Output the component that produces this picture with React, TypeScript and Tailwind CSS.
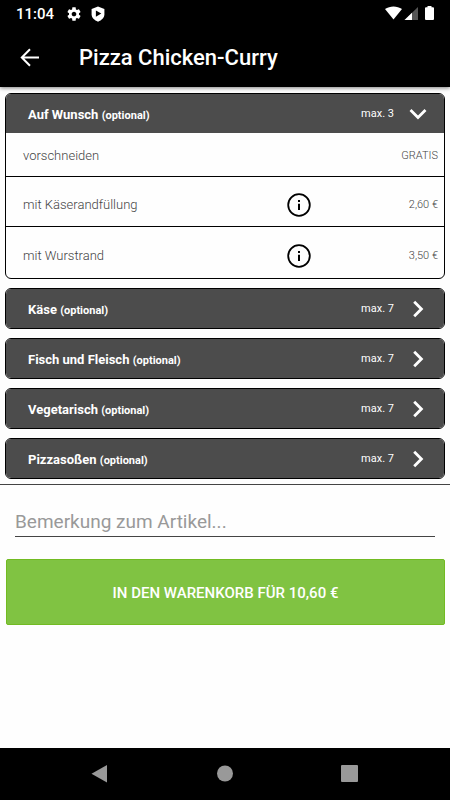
import { useState } from "react";

type Option = { name: string; price: string; info?: boolean };
type Group = { title: string; max: number; options: Option[] };

const GROUPS: Group[] = [
  {
    title: "Auf Wunsch",
    max: 3,
    options: [
      { name: "vorschneiden", price: "GRATIS" },
      { name: "mit Käserandfüllung", price: "2,60 €", info: true },
      { name: "mit Wurstrand", price: "3,50 €", info: true },
    ],
  },
  { title: "Käse", max: 7, options: [] },
  { title: "Fisch und Fleisch", max: 7, options: [] },
  { title: "Vegetarisch", max: 7, options: [] },
  { title: "Pizzasoßen", max: 7, options: [] },
];

function StatusBar() {
  return (
    <div className="flex h-7 items-center justify-between bg-black pr-[15px] pl-4 text-white">
      <div className="flex items-center">
        <span className="w-[50px] text-[15px] leading-7 font-medium">11:04</span>
        <svg className="size-4" viewBox="0 0 24 24" fill="currentColor" aria-hidden="true">
          <path d="M19.43 12.98c.04-.32.07-.64.07-.98s-.03-.66-.07-.98l2.11-1.65c.19-.15.24-.42.12-.64l-2-3.46c-.12-.22-.39-.3-.61-.22l-2.49 1c-.52-.4-1.08-.73-1.69-.98l-.38-2.65C14.46 2.18 14.25 2 14 2h-4c-.25 0-.46.18-.49.42l-.38 2.65c-.61.25-1.17.59-1.69.98l-2.49-1c-.23-.09-.49 0-.61.22l-2 3.46c-.13.22-.07.49.12.64l2.11 1.65c-.04.32-.07.65-.07.98s.03.66.07.98l-2.11 1.65c-.19.15-.24.42-.12.64l2 3.46c.12.22.39.3.61.22l2.49-1c.52.4 1.08.73 1.69.98l.38 2.65c.03.24.24.42.49.42h4c.25 0 .46-.18.49-.42l.38-2.65c.61-.25 1.17-.59 1.69-.98l2.49 1c.23.09.49 0 .61-.22l2-3.46c.12-.22.07-.49-.12-.64l-2.11-1.65zM12 15.5c-1.93 0-3.5-1.57-3.5-3.5s1.57-3.5 3.5-3.5 3.5 1.57 3.5 3.5-1.57 3.5-3.5 3.5z" />
        </svg>
        <svg className="ml-2 size-4" viewBox="0 0 16 16" aria-hidden="true">
          <path d="M8 .6 14.4 3v5.2c0 3.4-2.7 5.9-6.4 7.5-3.7-1.6-6.4-4.1-6.4-7.5V3z" fill="white" />
          <path d="M5.9 4.5 11.3 7.6 5.9 10.7z" fill="black" />
        </svg>
      </div>
      <div className="flex items-center">
        <svg className="h-4 w-[17px]" viewBox="0 0 17 16" aria-hidden="true">
          <path d="M8.5 13.5 0 3C5-.5 12-.5 17 3z" fill="white" />
        </svg>
        <svg className="ml-0.5 h-4 w-3.5" viewBox="0 0 14 16" aria-hidden="true">
          <path d="M14 1v13H.5z" fill="#555" />
          <path d="M8 6.8v7.2H.5z" fill="white" />
        </svg>
        <svg className="ml-1.5 h-4 w-[11px]" viewBox="0 0 11 16" aria-hidden="true">
          <path d="M3.5 0h4v1.3H9q1 0 1 1V13q0 1-1 1H2q-1 0-1-1V2.3q0-1 1-1h1.5z" fill="white" />
        </svg>
      </div>
    </div>
  );
}

function Chevron({ open }: { open: boolean }) {
  return (
    <svg className="size-5" viewBox="0 0 20 20" fill="none" stroke="white" strokeWidth="2.8" aria-hidden="true">
      {open ? <path d="M2.5 6 10 13.5 17.5 6" /> : <path d="M6.2 2.8 13.4 10 6.2 17.2" />}
    </svg>
  );
}

function InfoIcon() {
  return (
    <svg className="size-6" viewBox="0 0 24 24" aria-hidden="true">
      <circle cx="12" cy="12" r="10.8" fill="none" stroke="black" strokeWidth="1.8" />
      <path d="M11 7h2v2h-2zM11 10.8h2v6.2h-2z" fill="black" />
    </svg>
  );
}

function GroupCard({ group, initiallyOpen }: { group: Group; initiallyOpen: boolean }) {
  const [open, setOpen] = useState(initiallyOpen);
  return (
    <section className="overflow-hidden rounded-md border border-black bg-[#fefefe]">
      <button
        type="button"
        aria-expanded={open}
        onClick={() => setOpen(!open)}
        className="flex h-[39px] w-full items-center bg-[#4c4c4c] pr-4 pl-[22px] text-left text-white"
      >
        <span className="flex-1 pt-1 text-[13px] leading-5 font-bold">
          {group.title} <span className="text-[11px]">(optional)</span>
        </span>
        <span className="mr-3.5 pt-px text-[11px] leading-5">max. {group.max}</span>
        <Chevron open={open} />
      </button>
      {open && group.options.length > 0 && (
        <ul className="divide-y divide-black text-[#444]">
          {group.options.map((option) => (
            <li
              key={option.name}
              className="flex h-[50px] items-center pt-1.5 pr-1.5 pl-[17px] first:h-11 first:pt-0.5 last:h-[51px]"
            >
              <span className="flex-1 text-[13px] leading-5 font-light">{option.name}</span>
              {option.info && (
                <button type="button" aria-label={`Info zu ${option.name}`}>
                  <InfoIcon />
                </button>
              )}
              <span className="w-[127px] text-right text-[11px] leading-5 font-light">{option.price}</span>
            </li>
          ))}
        </ul>
      )}
    </section>
  );
}

export default function App() {
  return (
    <div className="flex min-h-screen flex-col bg-[#fefefe] font-['Roboto','Noto_Sans',sans-serif]">
      <header className="bg-black text-white shadow-[0_1px_4px_rgba(0,0,0,0.5)]">
        <StatusBar />
        <div className="flex h-[59px] items-center px-5">
          <button type="button" aria-label="Zurück" className="w-[59px]">
            <svg className="size-5" viewBox="0 0 20 20" fill="none" stroke="currentColor" strokeWidth="2" aria-hidden="true">
              <path d="M19 9.5H2M10 1.2 1.8 9.5 10 17.8" />
            </svg>
          </button>
          <h1 className="text-[22px] leading-7 font-medium">Pizza Chicken-Curry</h1>
        </div>
      </header>

      <main className="flex-1 pt-1.5">
        <div className="flex flex-col gap-[9px] px-[5px]">
          {GROUPS.map((group, index) => (
            <GroupCard key={group.title} group={group} initiallyOpen={index === 0} />
          ))}
        </div>
        <form className="mt-[5px] border-t border-[#444] px-[5px] pt-5" onSubmit={(e) => e.preventDefault()}>
          <div className="px-2.5">
            <input
              type="text"
              aria-label="Bemerkung zum Artikel"
              placeholder="Bemerkung zum Artikel..."
              className="block h-8 w-full border-b border-[#444] pt-0.5 text-[19px] text-[#444] outline-none placeholder:text-[#999]"
            />
          </div>
          <div className="pt-[22px] pl-px">
            <button
              type="submit"
              className="h-[66px] w-full rounded-xs border border-[#72bb22] bg-[#80c342] pt-0.5 text-[15px] font-medium text-white"
            >
              IN DEN WARENKORB FÜR 10,60 €
            </button>
          </div>
        </form>
      </main>

      <nav className="flex h-[52px] items-center justify-center gap-[101px] bg-black text-[#999]">
        <button type="button" aria-label="Zurück">
          <svg className="size-6" viewBox="0 0 24 24" fill="currentColor" aria-hidden="true">
            <path d="M19 3v17.5L3.5 11.7z" />
          </svg>
        </button>
        <button type="button" aria-label="Startseite">
          <svg className="size-6" viewBox="0 0 24 24" fill="currentColor" aria-hidden="true">
            <circle cx="12" cy="11.5" r="8" />
          </svg>
        </button>
        <button type="button" aria-label="Übersicht">
          <svg className="size-6" viewBox="0 0 24 24" fill="currentColor" aria-hidden="true">
            <rect x="3" y="3" width="17" height="17" rx="1" />
          </svg>
        </button>
      </nav>
    </div>
  );
}
